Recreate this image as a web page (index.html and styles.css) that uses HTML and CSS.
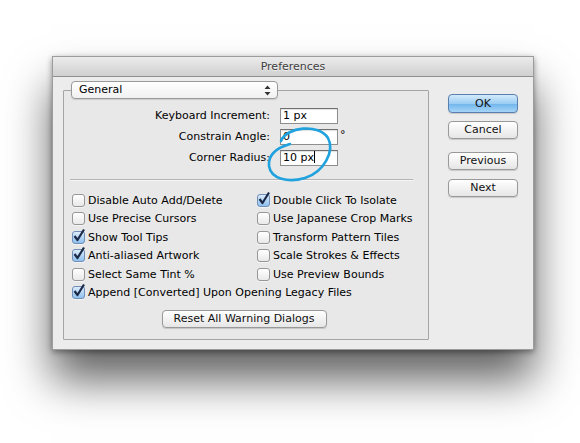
FILE: index.html
```html
<!DOCTYPE html>
<html>
<head>
<meta charset="utf-8">
<link rel="stylesheet" href="styles.css">
</head>
<body>
<div class="stage">
  <div class="window">
    <div class="titlebar">Preferences</div>
    <div class="content">
      <fieldset class="group">
        <legend class="popup">
          <span class="popup-text">General</span>
          <svg class="popup-arrows" width="7" height="11" viewBox="0 0 7 11"><path d="M3.5 0.5 L6.5 4 L0.5 4 Z M3.5 10.5 L6.5 7 L0.5 7 Z" fill="#333"/></svg>
        </legend>
        <div class="fields">
          <label class="field-label">Keyboard Increment:</label>
          <div class="field-value"><span class="input">1 px</span></div>
          <label class="field-label">Constrain Angle:</label>
          <div class="field-value"><span class="input">0</span><span class="unit">°</span></div>
          <label class="field-label">Corner Radius:</label>
          <div class="field-value"><span class="input">10 px<span class="caret"></span></span></div>
          <svg class="annotation" width="80" height="70" viewBox="260 120 80 70"><path d="M281 140 C 286 126 319 122 328 137 C 335 150 324 171 305 177 C 288 182 271 178 269 165 C 268 154 276 147 290 143" fill="none" stroke="#1fa2de" stroke-width="2.6" stroke-linecap="round"/></svg>
        </div>
        <div class="sep"></div>
        <div class="checks">
          <div class="check"><span class="box"></span>Disable Auto Add/Delete</div>
          <div class="check"><span class="box on"><svg width="14" height="15" viewBox="0 0 14 15"><path d="M2.5 8 L5.5 12 L12 1.5" fill="none" stroke="#1b2a48" stroke-width="2.2" stroke-linejoin="round"/></svg></span>Double Click To Isolate</div>
          <div class="check"><span class="box"></span>Use Precise Cursors</div>
          <div class="check"><span class="box"></span>Use Japanese Crop Marks</div>
          <div class="check"><span class="box on"><svg width="14" height="15" viewBox="0 0 14 15"><path d="M2.5 8 L5.5 12 L12 1.5" fill="none" stroke="#1b2a48" stroke-width="2.2" stroke-linejoin="round"/></svg></span>Show Tool Tips</div>
          <div class="check"><span class="box"></span>Transform Pattern Tiles</div>
          <div class="check"><span class="box on"><svg width="14" height="15" viewBox="0 0 14 15"><path d="M2.5 8 L5.5 12 L12 1.5" fill="none" stroke="#1b2a48" stroke-width="2.2" stroke-linejoin="round"/></svg></span>Anti-aliased Artwork</div>
          <div class="check"><span class="box"></span>Scale Strokes &amp; Effects</div>
          <div class="check"><span class="box"></span>Select Same Tint %</div>
          <div class="check"><span class="box"></span>Use Preview Bounds</div>
          <div class="check wide"><span class="box on"><svg width="14" height="15" viewBox="0 0 14 15"><path d="M2.5 8 L5.5 12 L12 1.5" fill="none" stroke="#1b2a48" stroke-width="2.2" stroke-linejoin="round"/></svg></span>Append [Converted] Upon Opening Legacy Files</div>
        </div>
        <div class="reset-row"><button class="btn reset">Reset All Warning Dialogs</button></div>
      </fieldset>
      <div class="side">
        <button class="btn primary">OK</button>
        <button class="btn cancel">Cancel</button>
        <button class="btn prev">Previous</button>
        <button class="btn next">Next</button>
      </div>
    </div>
  </div>
</div>
</body>
</html>
```

FILE: styles.css
```css
* { box-sizing: border-box; }
html, body { margin: 0; padding: 0; background: #ffffff; }
body { width: 580px; height: 443px; overflow: hidden; font-family: "DejaVu Sans", "Liberation Sans", sans-serif; font-size: 11px; color: #000; }

.stage { padding: 56px 0 0 52px; }

.window {
  position: relative;
  width: 482px;
  background: #ececec;
  border: 1px solid #9c9c9c;
  box-shadow: 0 30px 42px rgba(0,0,0,0.62), 0 2px 6px rgba(0,0,0,0.4);
}

.titlebar {
  height: 20px;
  line-height: 19px;
  text-align: center;
  color: #3d3d3d;
  text-shadow: 0 1px 0 rgba(255,255,255,0.6);
  background: linear-gradient(#ebebeb, #d0d0d0);
  border-bottom: 1px solid #8f8f8f;
}

.content {
  display: flex;
  align-items: flex-start;
  padding: 4px 0 9px 10px;
}

.group {
  margin: 0;
  width: 366px;
  height: 259px;
  padding: 9px 0 0 0;
  border: 1px solid #a4a4a4;
  border-radius: 1px;
  background: #e8e8e8;
  display: flex;
  flex-direction: column;
}

.popup {
  margin-left: 7px;
  width: 207px;
  height: 18px;
  padding: 0 6px 0 7px;
  display: flex;
  align-items: center;
  justify-content: space-between;
  border: 1px solid #9a9a9a;
  border-radius: 4px;
  background: linear-gradient(#ffffff, #f1f1f1);
  box-shadow: 0 1px 1px rgba(0,0,0,0.12);
}
.popup-text { line-height: 16px; }
.popup-arrows { display: block; }

.fields {
  position: relative;
  display: grid;
  grid-template-columns: 206px 66px;
  column-gap: 10px;
  row-gap: 5px;
  align-items: center;
}
.field-label { text-align: right; line-height: 16px; }
.field-value { display: flex; align-items: center; height: 16px; }
.input {
  position: relative;
  width: 58px;
  height: 16px;
  line-height: 14px;
  padding-left: 2px;
  background: #fff;
  border: 1px solid #8e8e8e;
  border-top-color: #6f6f6f;
  box-shadow: inset 0 1px 1px rgba(0,0,0,0.12);
}
.caret {
  display: inline-block;
  width: 1px;
  height: 12px;
  background: #000;
  vertical-align: -2px;
}
.unit { margin-left: 2px; line-height: 12px; align-self: flex-start; }
.annotation { position: absolute; left: 196px; top: 13px; overflow: visible; }

.sep {
  margin: 13px 15px 0 6px;
  height: 1px;
  background: #b4b4b4;
  box-shadow: 0 1px 0 #f6f6f6;
}

.checks {
  margin-top: 11px;
  padding-left: 8px;
  display: grid;
  grid-template-columns: 185px 1fr;
  grid-auto-rows: 18.5px;
}
.check { display: flex; align-items: center; white-space: nowrap; }
.check.wide { grid-column: 1 / span 2; }
.box {
  position: relative;
  flex: none;
  width: 13px;
  height: 13px;
  margin-right: 3px;
  border: 1px solid #979797;
  border-radius: 3px;
  background: linear-gradient(#ffffff, #e9e9e9);
  box-shadow: 0 1px 0 rgba(255,255,255,0.5);
}
.box.on {
  border-color: #6f8fb8;
  background: linear-gradient(#dcecfb, #8fc0ee);
}
.box svg { position: absolute; left: -1px; top: -4px; }

.reset-row { margin-top: 8px; display: flex; justify-content: center; padding-right: 4px; }

.btn {
  font-family: "DejaVu Sans", "Liberation Sans", sans-serif;
  font-size: 11px;
  color: #111;
  height: 18px;
  padding: 0;
  border: 1px solid #999;
  border-radius: 4px;
  background: linear-gradient(#ffffff, #f0f0f0 60%, #e6e6e6);
  box-shadow: 0 1px 1px rgba(0,0,0,0.15);
  line-height: 16px;
}
.reset { width: 165px; }

.side {
  margin-left: 19px;
  padding-top: 13px;
  display: flex;
  flex-direction: column;
  width: 70px;
}
.side .btn { width: 70px; }
.primary {
  height: 19px;
  border-color: #5b7fae;
  background: linear-gradient(#d4eafb, #9ccdf4 50%, #6fb4ec 51%, #a6d5f8);
}
.cancel { margin-top: 8px; }
.prev { margin-top: 13px; }
.next { margin-top: 9px; }
```
